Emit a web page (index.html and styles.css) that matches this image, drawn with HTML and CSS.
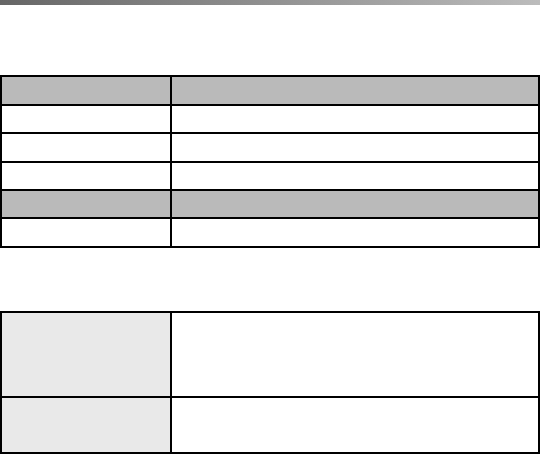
FILE: index.html
```html
<!DOCTYPE html>
<html>
<head>
<meta charset="utf-8">
<link rel="stylesheet" href="styles.css">
</head>
<body>
<div class="bar"></div>
<div class="grid grid-a">
  <div class="cell head r1"></div><div class="cell head r1"></div>
  <div class="cell r2"></div><div class="cell r2"></div>
  <div class="cell r3"></div><div class="cell r3"></div>
  <div class="cell r4"></div><div class="cell r4"></div>
  <div class="cell head r5"></div><div class="cell head r5"></div>
  <div class="cell r6"></div><div class="cell r6"></div>
</div>
<div class="grid grid-b">
  <div class="cell label tall"></div><div class="cell tall"></div>
  <div class="cell label short"></div><div class="cell short"></div>
</div>
</body>
</html>
```

FILE: styles.css
```css
html, body {
  margin: 0;
  padding: 0;
  background: #ffffff;
  font-family: "Liberation Sans", Arial, sans-serif;
}
.bar {
  height: 5px;
  width: 540px;
  background: linear-gradient(to right, #666666, #bcbcbc);
}
.grid {
  display: grid;
  grid-template-columns: 170px 368px;
  width: 538px;
  border-top: 2px solid #000;
  border-left: 2px solid #000;
}
.grid-a {
  margin-top: 70px;
  grid-template-rows: 29px 28px 29px 28px 28px 29px;
}
.grid-b {
  margin-top: 63px;
  grid-template-rows: 85px 56px;
}
.cell {
  border-right: 2px solid #000;
  border-bottom: 2px solid #000;
  background: #ffffff;
}
.head {
  background: #bababa;
}
.label {
  background: #e9e9e9;
}
```
